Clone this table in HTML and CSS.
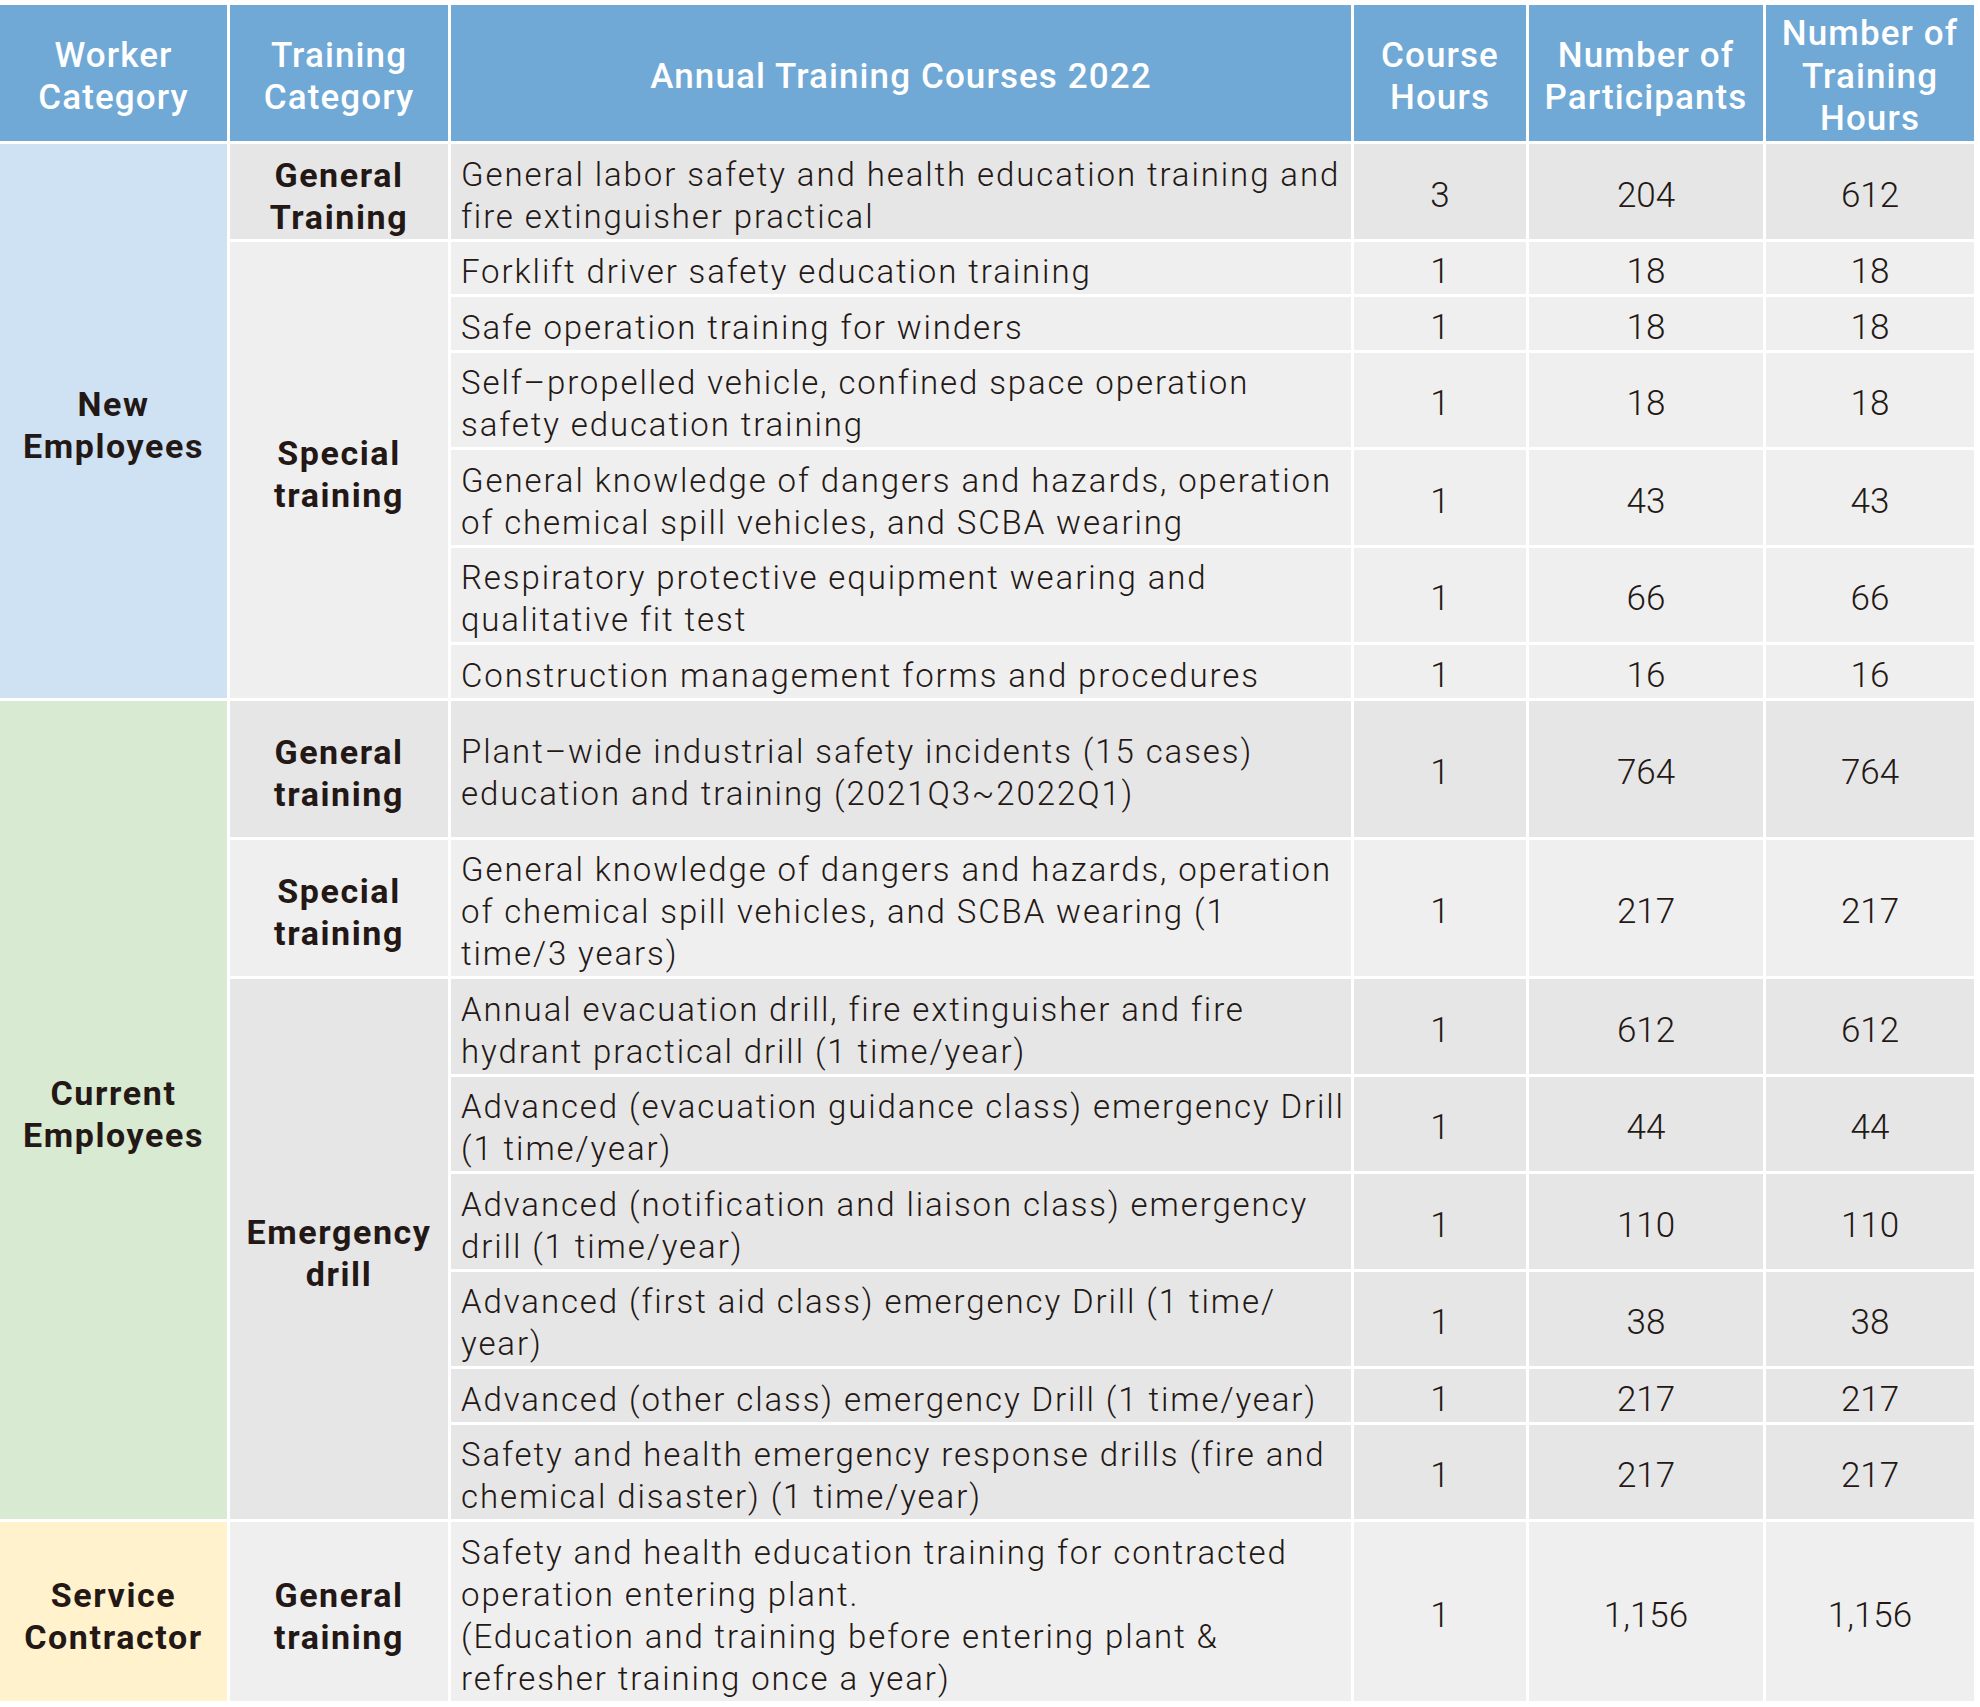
FILE: index.html
```html
<!DOCTYPE html>
<html lang="en">
<head>
<meta charset="utf-8">
<title>Annual Training Courses 2022</title>
<link rel="stylesheet" href="styles.css">
</head>
<body>
<div class="page">
  <div class="grid" role="table">
    <div class="cell head">Worker<br>Category</div>
    <div class="cell head">Training<br>Category</div>
    <div class="cell head">Annual Training Courses 2022</div>
    <div class="cell head">Course<br>Hours</div>
    <div class="cell head">Number of<br>Participants</div>
    <div class="cell head">Number of<br>Training<br>Hours</div>

    <!-- New Employees -->
    <div class="cell label worker-new span-7">New<br>Employees</div>
    <div class="cell label dark">General<br>Training</div>
    <div class="cell course dark">General labor safety and health education training and<br>fire extinguisher practical</div>
    <div class="cell num dark">3</div>
    <div class="cell num dark">204</div>
    <div class="cell num dark">612</div>

    <div class="cell label light span-6">Special<br>training</div>
    <div class="cell course light">Forklift driver safety education training</div>
    <div class="cell num light">1</div>
    <div class="cell num light">18</div>
    <div class="cell num light">18</div>

    <div class="cell course light">Safe operation training for winders</div>
    <div class="cell num light">1</div>
    <div class="cell num light">18</div>
    <div class="cell num light">18</div>

    <div class="cell course light">Self–propelled vehicle, confined space operation<br>safety education training</div>
    <div class="cell num light">1</div>
    <div class="cell num light">18</div>
    <div class="cell num light">18</div>

    <div class="cell course light">General knowledge of dangers and hazards, operation<br>of chemical spill vehicles, and SCBA wearing</div>
    <div class="cell num light">1</div>
    <div class="cell num light">43</div>
    <div class="cell num light">43</div>

    <div class="cell course light">Respiratory protective equipment wearing and<br>qualitative fit test</div>
    <div class="cell num light">1</div>
    <div class="cell num light">66</div>
    <div class="cell num light">66</div>

    <div class="cell course light">Construction management forms and procedures</div>
    <div class="cell num light">1</div>
    <div class="cell num light">16</div>
    <div class="cell num light">16</div>

    <!-- Current Employees -->
    <div class="cell label worker-current span-8">Current<br>Employees</div>
    <div class="cell label dark">General<br>training</div>
    <div class="cell course dark tall">Plant–wide industrial safety incidents (15 cases)<br>education and training (2021Q3~2022Q1)</div>
    <div class="cell num dark">1</div>
    <div class="cell num dark">764</div>
    <div class="cell num dark">764</div>

    <div class="cell label light">Special<br>training</div>
    <div class="cell course light">General knowledge of dangers and hazards, operation<br>of chemical spill vehicles, and SCBA wearing (1<br>time/3 years)</div>
    <div class="cell num light">1</div>
    <div class="cell num light">217</div>
    <div class="cell num light">217</div>

    <div class="cell label dark span-6">Emergency<br>drill</div>
    <div class="cell course dark">Annual evacuation drill, fire extinguisher and fire<br>hydrant practical drill (1 time/year)</div>
    <div class="cell num dark">1</div>
    <div class="cell num dark">612</div>
    <div class="cell num dark">612</div>

    <div class="cell course dark">Advanced (evacuation guidance class) emergency Drill<br>(1 time/year)</div>
    <div class="cell num dark">1</div>
    <div class="cell num dark">44</div>
    <div class="cell num dark">44</div>

    <div class="cell course dark">Advanced (notification and liaison class) emergency<br>drill (1 time/year)</div>
    <div class="cell num dark">1</div>
    <div class="cell num dark">110</div>
    <div class="cell num dark">110</div>

    <div class="cell course dark">Advanced (first aid class) emergency Drill (1 time/<br>year)</div>
    <div class="cell num dark">1</div>
    <div class="cell num dark">38</div>
    <div class="cell num dark">38</div>

    <div class="cell course dark">Advanced (other class) emergency Drill (1 time/year)</div>
    <div class="cell num dark">1</div>
    <div class="cell num dark">217</div>
    <div class="cell num dark">217</div>

    <div class="cell course dark">Safety and health emergency response drills (fire and<br>chemical disaster) (1 time/year)</div>
    <div class="cell num dark">1</div>
    <div class="cell num dark">217</div>
    <div class="cell num dark">217</div>

    <!-- Service Contractor -->
    <div class="cell label worker-contractor">Service<br>Contractor</div>
    <div class="cell label light">General<br>training</div>
    <div class="cell course light">Safety and health education training for contracted<br>operation entering plant.<br>(Education and training before entering plant &amp;<br>refresher training once a year)</div>
    <div class="cell num light">1</div>
    <div class="cell num light">1,156</div>
    <div class="cell num light">1,156</div>
  </div>
</div>
</body>
</html>
```

FILE: styles.css
```css
html, body {
  margin: 0;
  padding: 0;
  background: #ffffff;
}

body {
  font-family: Roboto, "Liberation Sans", Arial, sans-serif;
  color: #231815;
}

.page {
  padding: 5px 6px 6px 0;
}

.grid {
  display: grid;
  grid-template-columns: 227px 218px 900px 172px 234px 208px;
  gap: 3px;
  background: #ffffff;
}

.cell {
  display: flex;
  align-items: center;
  justify-content: center;
  text-align: center;
  box-sizing: border-box;
  padding: 9.5px 4px 1px;
}

.head {
  background: #70a9d6;
  color: #ffffff;
  font-weight: 500;
  font-size: 35px;
  line-height: 42.5px;
  letter-spacing: 1.1px;
  min-height: 136px;
  padding: 8px 4px 0;
}

.label {
  font-weight: 700;
  font-size: 34px;
  line-height: 42px;
  letter-spacing: 1.6px;
}

.course {
  justify-content: flex-start;
  text-align: left;
  padding-left: 10px;
  padding-right: 6px;
  font-weight: 300;
  font-size: 33px;
  line-height: 42px;
  letter-spacing: 1.9px;
}

.num {
  font-weight: 300;
  font-size: 35px;
  line-height: 42px;
}

.tall {
  min-height: 136px;
}

.dark { background: #e6e6e6; }
.light { background: #efefef; }

.worker-new { background: #cfe2f3; }
.worker-current { background: #d9ead3; }
.worker-contractor { background: #fff2cc; }

.span-6 { grid-row: span 6; }
.span-7 { grid-row: span 7; }
.span-8 { grid-row: span 8; }
```
